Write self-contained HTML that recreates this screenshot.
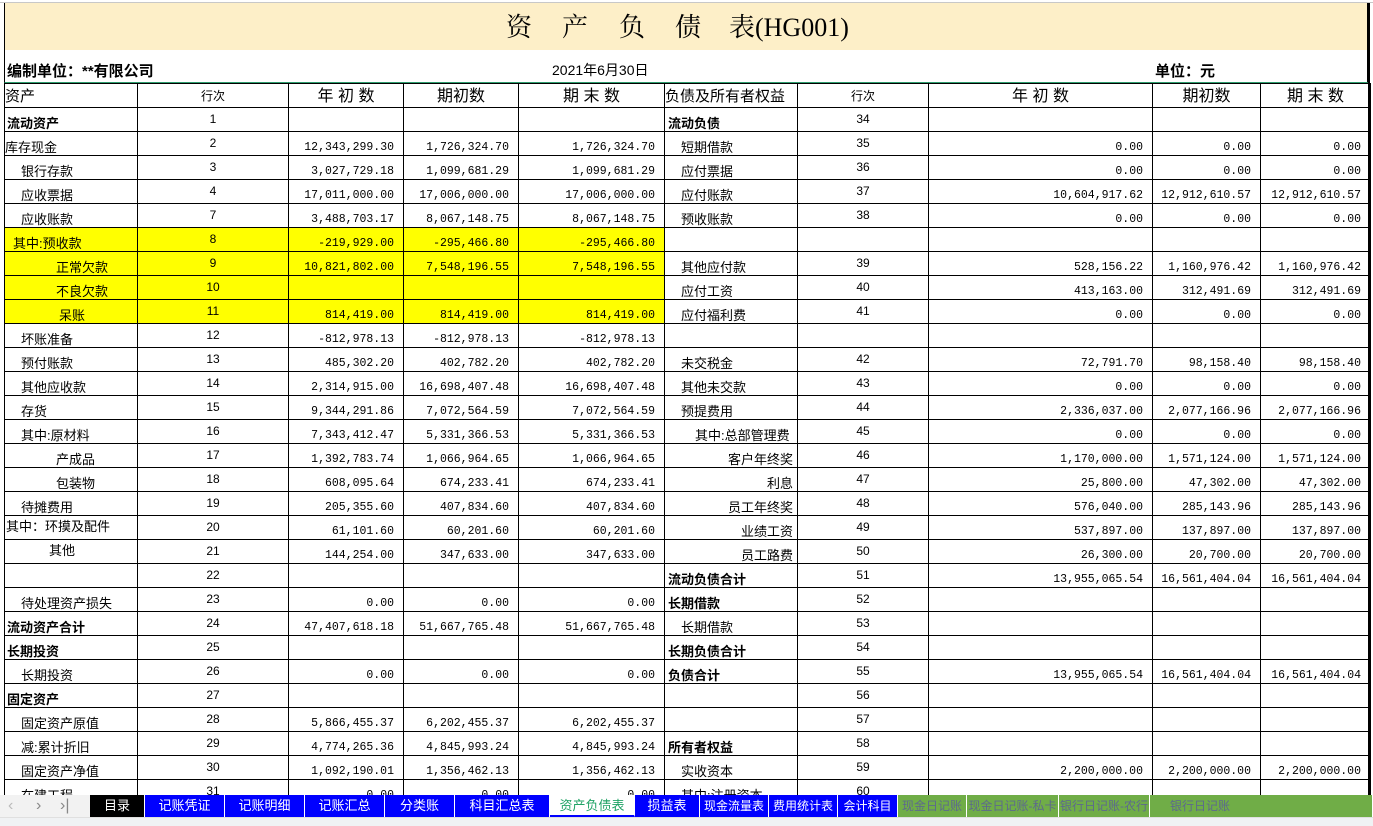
<!DOCTYPE html>
<html><head><meta charset="utf-8">
<style>
*{margin:0;padding:0;box-sizing:border-box}
body{width:1373px;height:826px;overflow:hidden;background:#fff;position:relative;font-family:"Liberation Sans","Noto Sans CJK SC",sans-serif;color:#000}
#top{position:absolute;left:0;top:0;width:1373px;height:3px;border-bottom:1px solid #c8c8c8}
#title{position:absolute;left:4px;top:3px;width:1365px;height:47px;background:#fdefc8;border-left:1px solid #000;border-right:2px solid #000}
#title span{position:absolute;top:10px;font-family:"Liberation Serif","Noto Serif CJK SC",serif;font-size:26px;line-height:30px}
#info{position:absolute;left:4px;top:50px;width:1365px;height:33px;border-left:1px solid #000;border-right:2px solid #000;border-bottom:1px solid #2e9e6e;font-size:15px;font-weight:bold}
#info span{position:absolute;top:10px}
table{position:absolute;left:4px;top:83px;border-collapse:collapse;table-layout:fixed;width:1365px}
td{border:1px solid #000;height:24px;padding:0;overflow:hidden;white-space:nowrap;font-size:13px;line-height:15px;vertical-align:bottom;padding-bottom:0}
tr{height:24px}
td.n{text-align:center;vertical-align:top;padding-top:4px;font-size:12px}
td.v{text-align:right;padding-right:9px;font-family:"Liberation Mono",monospace;font-size:11.5px;padding-bottom:0}
td.b{font-weight:bold}
tr.h td{font-size:16px;text-align:center;vertical-align:middle;padding:2px 0 0 0}
tr.h td.s{font-size:12px}
tr.h td.lh{text-align:left;font-size:15px}
.y td.yy{background:#ffff00}
td.rc{text-align:right;padding-right:4px}
#rb{position:absolute;left:1368px;top:3px;width:2px;height:792px;background:#000}
#tabs{position:absolute;left:0;top:795px;width:1373px;height:22px;background:#f2f2f2;overflow:hidden}
#tabs div{position:absolute;top:0;height:22px;line-height:22px;font-size:13px;text-align:center;color:#fff;border-right:1px solid #fff;white-space:nowrap;overflow:hidden}
#gray{position:absolute;left:0;top:817px;width:1373px;height:9px;background:#f0f2f4;border-top:1px solid #e0e0e0}
.nav{position:absolute;top:795px;color:#888;font-size:16px;line-height:22px}
</style></head><body>
<div id="top"></div>
<div id="title">
<span style="left:501px">资</span><span style="left:557px">产</span><span style="left:614px">负</span><span style="left:670px">债</span><span style="left:724px">表(HG001)</span>
</div>
<div id="info"><span style="left:2px">编制单位：**有限公司</span><span style="left:547px;font-weight:normal;font-size:14px">2021年6月30日</span><span style="left:1150px">单位：元</span></div>
<table>
<colgroup><col style="width:133px"><col style="width:151px"><col style="width:115px"><col style="width:115px"><col style="width:146px"><col style="width:133px"><col style="width:131px"><col style="width:224px"><col style="width:108px"><col style="width:110px"></colgroup>
<tr class="h"><td class="lh">资产</td><td class="s">行次</td><td>年 初 数</td><td>期初数</td><td>期 末 数</td><td class="lh">负债及所有者权益</td><td class="s">行次</td><td>年 初 数</td><td>期初数</td><td>期 末 数</td></tr>
<tr><td class="b" style="padding-left:2px">流动资产</td><td class="n">1</td><td class="v"></td><td class="v"></td><td class="v"></td><td class="b" style="padding-left:3px">流动负债</td><td class="n">34</td><td class="v"></td><td class="v"></td><td class="v"></td></tr>
<tr><td>库存现金</td><td class="n">2</td><td class="v">12,343,299.30</td><td class="v">1,726,324.70</td><td class="v">1,726,324.70</td><td style="padding-left:16px">短期借款</td><td class="n">35</td><td class="v">0.00</td><td class="v">0.00</td><td class="v">0.00</td></tr>
<tr><td style="padding-left:16px">银行存款</td><td class="n">3</td><td class="v">3,027,729.18</td><td class="v">1,099,681.29</td><td class="v">1,099,681.29</td><td style="padding-left:16px">应付票据</td><td class="n">36</td><td class="v">0.00</td><td class="v">0.00</td><td class="v">0.00</td></tr>
<tr><td style="padding-left:16px">应收票据</td><td class="n">4</td><td class="v">17,011,000.00</td><td class="v">17,006,000.00</td><td class="v">17,006,000.00</td><td style="padding-left:16px">应付账款</td><td class="n">37</td><td class="v">10,604,917.62</td><td class="v">12,912,610.57</td><td class="v">12,912,610.57</td></tr>
<tr><td style="padding-left:16px">应收账款</td><td class="n">7</td><td class="v">3,488,703.17</td><td class="v">8,067,148.75</td><td class="v">8,067,148.75</td><td style="padding-left:16px">预收账款</td><td class="n">38</td><td class="v">0.00</td><td class="v">0.00</td><td class="v">0.00</td></tr>
<tr class="y"><td class="yy" style="padding-left:8px">其中:预收款</td><td class="n yy">8</td><td class="v yy">-219,929.00</td><td class="v yy">-295,466.80</td><td class="v yy">-295,466.80</td><td></td><td class="n"></td><td class="v"></td><td class="v"></td><td class="v"></td></tr>
<tr class="y"><td class="yy" style="padding-left:51px">正常欠款</td><td class="n yy">9</td><td class="v yy">10,821,802.00</td><td class="v yy">7,548,196.55</td><td class="v yy">7,548,196.55</td><td style="padding-left:16px">其他应付款</td><td class="n">39</td><td class="v">528,156.22</td><td class="v">1,160,976.42</td><td class="v">1,160,976.42</td></tr>
<tr class="y"><td class="yy" style="padding-left:51px">不良欠款</td><td class="n yy">10</td><td class="v yy"></td><td class="v yy"></td><td class="v yy"></td><td style="padding-left:16px">应付工资</td><td class="n">40</td><td class="v">413,163.00</td><td class="v">312,491.69</td><td class="v">312,491.69</td></tr>
<tr class="y"><td class="yy" style="padding-left:54px">呆账</td><td class="n yy">11</td><td class="v yy">814,419.00</td><td class="v yy">814,419.00</td><td class="v yy">814,419.00</td><td style="padding-left:16px">应付福利费</td><td class="n">41</td><td class="v">0.00</td><td class="v">0.00</td><td class="v">0.00</td></tr>
<tr><td style="padding-left:16px">坏账准备</td><td class="n">12</td><td class="v">-812,978.13</td><td class="v">-812,978.13</td><td class="v">-812,978.13</td><td></td><td class="n"></td><td class="v"></td><td class="v"></td><td class="v"></td></tr>
<tr><td style="padding-left:16px">预付账款</td><td class="n">13</td><td class="v">485,302.20</td><td class="v">402,782.20</td><td class="v">402,782.20</td><td style="padding-left:16px">未交税金</td><td class="n">42</td><td class="v">72,791.70</td><td class="v">98,158.40</td><td class="v">98,158.40</td></tr>
<tr><td style="padding-left:16px">其他应收款</td><td class="n">14</td><td class="v">2,314,915.00</td><td class="v">16,698,407.48</td><td class="v">16,698,407.48</td><td style="padding-left:16px">其他未交款</td><td class="n">43</td><td class="v">0.00</td><td class="v">0.00</td><td class="v">0.00</td></tr>
<tr><td style="padding-left:16px">存货</td><td class="n">15</td><td class="v">9,344,291.86</td><td class="v">7,072,564.59</td><td class="v">7,072,564.59</td><td style="padding-left:16px">预提费用</td><td class="n">44</td><td class="v">2,336,037.00</td><td class="v">2,077,166.96</td><td class="v">2,077,166.96</td></tr>
<tr><td style="padding-left:16px">其中:原材料</td><td class="n">16</td><td class="v">7,343,412.47</td><td class="v">5,331,366.53</td><td class="v">5,331,366.53</td><td style="padding-left:30px">其中:总部管理费</td><td class="n">45</td><td class="v">0.00</td><td class="v">0.00</td><td class="v">0.00</td></tr>
<tr><td style="padding-left:51px">产成品</td><td class="n">17</td><td class="v">1,392,783.74</td><td class="v">1,066,964.65</td><td class="v">1,066,964.65</td><td class="rc">客户年终奖</td><td class="n">46</td><td class="v">1,170,000.00</td><td class="v">1,571,124.00</td><td class="v">1,571,124.00</td></tr>
<tr><td style="padding-left:51px">包装物</td><td class="n">18</td><td class="v">608,095.64</td><td class="v">674,233.41</td><td class="v">674,233.41</td><td class="rc">利息</td><td class="n">47</td><td class="v">25,800.00</td><td class="v">47,302.00</td><td class="v">47,302.00</td></tr>
<tr><td style="padding-left:16px">待摊费用</td><td class="n">19</td><td class="v">205,355.60</td><td class="v">407,834.60</td><td class="v">407,834.60</td><td class="rc">员工年终奖</td><td class="n">48</td><td class="v">576,040.00</td><td class="v">285,143.96</td><td class="v">285,143.96</td></tr>
<tr><td style="padding-left:1px;vertical-align:top;padding-top:3px">其中：环摸及配件</td><td class="n">20</td><td class="v">61,101.60</td><td class="v">60,201.60</td><td class="v">60,201.60</td><td class="rc">业绩工资</td><td class="n">49</td><td class="v">537,897.00</td><td class="v">137,897.00</td><td class="v">137,897.00</td></tr>
<tr><td style="padding-left:44px;vertical-align:top;padding-top:3px">其他</td><td class="n">21</td><td class="v">144,254.00</td><td class="v">347,633.00</td><td class="v">347,633.00</td><td class="rc">员工路费</td><td class="n">50</td><td class="v">26,300.00</td><td class="v">20,700.00</td><td class="v">20,700.00</td></tr>
<tr><td></td><td class="n">22</td><td class="v"></td><td class="v"></td><td class="v"></td><td class="b" style="padding-left:3px">流动负债合计</td><td class="n">51</td><td class="v">13,955,065.54</td><td class="v">16,561,404.04</td><td class="v">16,561,404.04</td></tr>
<tr><td style="padding-left:16px">待处理资产损失</td><td class="n">23</td><td class="v">0.00</td><td class="v">0.00</td><td class="v">0.00</td><td class="b" style="padding-left:3px">长期借款</td><td class="n">52</td><td class="v"></td><td class="v"></td><td class="v"></td></tr>
<tr><td class="b" style="padding-left:2px">流动资产合计</td><td class="n">24</td><td class="v">47,407,618.18</td><td class="v">51,667,765.48</td><td class="v">51,667,765.48</td><td style="padding-left:16px">长期借款</td><td class="n">53</td><td class="v"></td><td class="v"></td><td class="v"></td></tr>
<tr><td class="b" style="padding-left:2px">长期投资</td><td class="n">25</td><td class="v"></td><td class="v"></td><td class="v"></td><td class="b" style="padding-left:3px">长期负债合计</td><td class="n">54</td><td class="v"></td><td class="v"></td><td class="v"></td></tr>
<tr><td style="padding-left:16px">长期投资</td><td class="n">26</td><td class="v">0.00</td><td class="v">0.00</td><td class="v">0.00</td><td class="b" style="padding-left:3px">负债合计</td><td class="n">55</td><td class="v">13,955,065.54</td><td class="v">16,561,404.04</td><td class="v">16,561,404.04</td></tr>
<tr><td class="b" style="padding-left:2px">固定资产</td><td class="n">27</td><td class="v"></td><td class="v"></td><td class="v"></td><td></td><td class="n">56</td><td class="v"></td><td class="v"></td><td class="v"></td></tr>
<tr><td style="padding-left:16px">固定资产原值</td><td class="n">28</td><td class="v">5,866,455.37</td><td class="v">6,202,455.37</td><td class="v">6,202,455.37</td><td></td><td class="n">57</td><td class="v"></td><td class="v"></td><td class="v"></td></tr>
<tr><td style="padding-left:16px">减:累计折旧</td><td class="n">29</td><td class="v">4,774,265.36</td><td class="v">4,845,993.24</td><td class="v">4,845,993.24</td><td class="b" style="padding-left:3px">所有者权益</td><td class="n">58</td><td class="v"></td><td class="v"></td><td class="v"></td></tr>
<tr><td style="padding-left:16px">固定资产净值</td><td class="n">30</td><td class="v">1,092,190.01</td><td class="v">1,356,462.13</td><td class="v">1,356,462.13</td><td style="padding-left:16px">实收资本</td><td class="n">59</td><td class="v">2,200,000.00</td><td class="v">2,200,000.00</td><td class="v">2,200,000.00</td></tr>
<tr><td style="padding-left:16px">在建工程</td><td class="n">31</td><td class="v">0.00</td><td class="v">0.00</td><td class="v">0.00</td><td style="padding-left:16px">其中:注册资本</td><td class="n">60</td><td class="v"></td><td class="v"></td><td class="v"></td></tr>
</table>
<div id="rb"></div>
<div id="tabs">
<div style="left:90px;width:55px;background:#000">目录</div>
<div style="left:145px;width:80px;background:#0000ff">记账凭证</div>
<div style="left:225px;width:80px;background:#0000ff">记账明细</div>
<div style="left:305px;width:80px;background:#0000ff">记账汇总</div>
<div style="left:385px;width:70px;background:#0000ff">分类账</div>
<div style="left:455px;width:95px;background:#0000ff">科目汇总表</div>
<div style="left:550px;width:85px;background:#fff;color:#21a366;border-bottom:2px solid #0000ff">资产负债表</div>
<div style="left:635px;width:65px;background:#0000ff">损益表</div>
<div style="left:700px;width:69px;background:#0000ff;font-size:12px">现金流量表</div>
<div style="left:769px;width:69px;background:#0000ff;font-size:12px">费用统计表</div>
<div style="left:838px;width:60px;background:#0000ff;font-size:12px">会计科目</div>
<div style="left:898px;width:69px;background:#70ad47;color:#5d6a8c;font-size:12px">现金日记账</div>
<div style="left:967px;width:92px;background:#70ad47;color:#5d6a8c;font-size:12px">现金日记账-私卡</div>
<div style="left:1059px;width:91px;background:#70ad47;color:#5d6a8c;font-size:12px">银行日记账-农行</div>
<div style="left:1150px;width:223px;background:#70ad47;color:#5d6a8c;text-align:left;padding-left:20px;font-size:12px">银行日记账</div>
</div>
<span class="nav" style="left:8px;color:#bbb">&#8249;</span>
<span class="nav" style="left:36px">&#8250;</span>
<span class="nav" style="left:60px">&#8250;|</span>
<div id="gray"></div>
</body></html>
